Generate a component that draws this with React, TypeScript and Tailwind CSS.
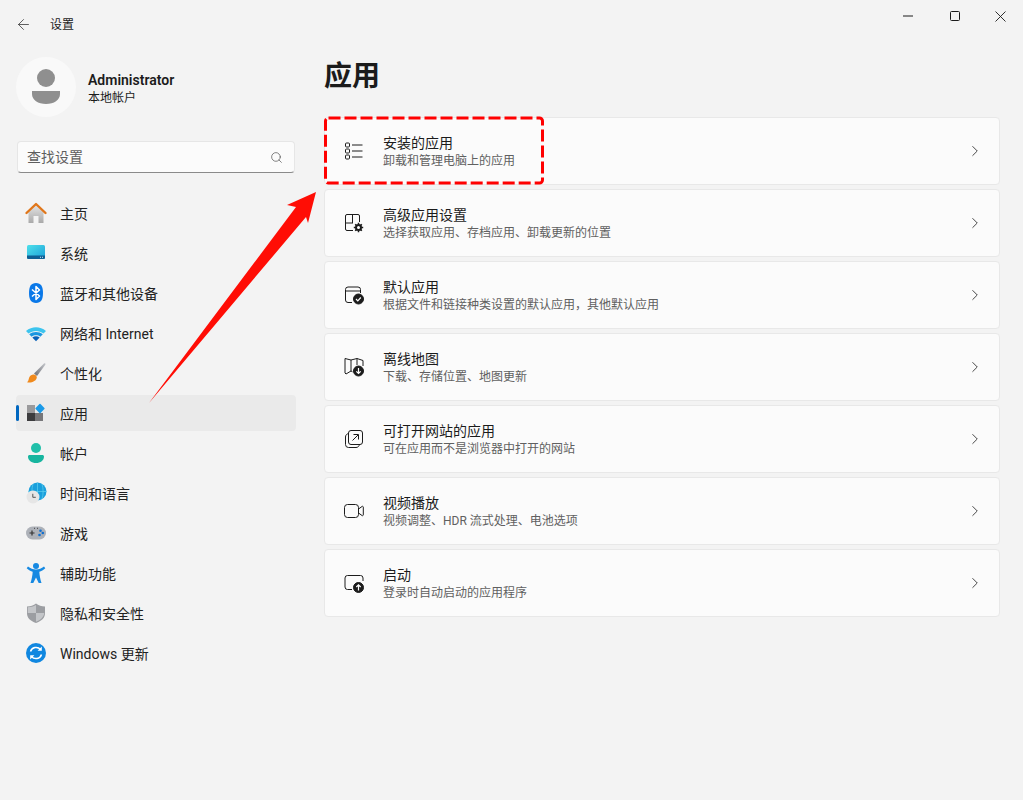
import { ChevronRight, ArrowLeft, Search } from "lucide-react";
import type { ReactNode } from "react";

const font = { fontFamily: 'Roboto, "Noto Sans CJK SC", sans-serif' };

function IconHome() {
  return (
    <svg width="24" height="24" viewBox="0 0 24 24">
      <defs>
        <linearGradient id="homeBody" x1="0" y1="0" x2="0" y2="1">
          <stop offset="0" stopColor="#e4e4e4" />
          <stop offset="1" stopColor="#a9a9a9" />
        </linearGradient>
      </defs>
      <path d="M4.500 11 12 4l7.500 7v11h-5v-7h-5v7h-5z" fill="url(#homeBody)" />
      <path d="M2.500 12 12 3l9.500 9" fill="none" stroke="#e0761a" strokeWidth="2.400" strokeLinecap="round" strokeLinejoin="round" />
    </svg>
  );
}

function IconSystem() {
  return (
    <svg width="24" height="24" viewBox="0 0 24 24">
      <defs>
        <linearGradient id="sysTop" x1="0" y1="0" x2="1" y2="1">
          <stop offset="0" stopColor="#4fe0ea" />
          <stop offset="1" stopColor="#1a9fd8" />
        </linearGradient>
      </defs>
      <rect x="3" y="4" width="18" height="14" rx="1.500" fill="url(#sysTop)" />
      <path d="M3 14.500h18V16.500a1.500 1.500 0 0 1-1.500 1.500h-15A1.500 1.500 0 0 1 3 16.500z" fill="#0f5f94" />
      <rect x="16" y="15.800" width="1" height="1" fill="#cfe8f5" />
      <rect x="18" y="15.800" width="1" height="1" fill="#cfe8f5" />
    </svg>
  );
}

function IconBluetooth() {
  return (
    <svg width="24" height="24" viewBox="0 0 24 24">
      <path d="M12 2c5 0 7 3.500 7 10s-2 10-7 10-7-3.500-7-10 2-10 7-10z" fill="#0a78e8" />
      <path d="M8 8.500 15.500 15 12 18.500V5.500L15.500 9 8 15.500" fill="none" stroke="#fff" strokeWidth="1.500" strokeLinejoin="round" />
    </svg>
  );
}

function IconWifi() {
  return (
    <svg width="24" height="24" viewBox="0 0 24 24">
      <path d="M2 10c6-5 14-5 20 0l-2.500 2.500c-4.500-3.500-10.500-3.500-15 0z" fill="#3cc4ee" />
      <path d="M5.200 13.300c4-3.200 9.600-3.200 13.600 0l-2.400 2.400c-2.600-1.900-6.200-1.900-8.800 0z" fill="#1a96e0" />
      <path d="M8.300 16.400c2.200-1.500 5.200-1.500 7.400 0L12 20.200z" fill="#0a62b8" />
    </svg>
  );
}

function IconBrush() {
  return (
    <svg width="24" height="24" viewBox="0 0 24 24">
      <defs>
        <linearGradient id="brushH" x1="0" y1="1" x2="1" y2="0">
          <stop offset="0" stopColor="#6d6f75" />
          <stop offset="1" stopColor="#c4c6cb" />
        </linearGradient>
      </defs>
      <path d="M20 2.500c1-.6 1.800.2 1.300 1.200L13 15l-3-2.500z" fill="url(#brushH)" />
      <path d="M9 13.500c2-.5 4 1 3.800 3-.3 3.500-5.500 5.800-9.800 4.800 1.800-1.500 1.500-3 2.200-4.800.6-1.500 2-2.700 3.800-3z" fill="#f08a1d" />
    </svg>
  );
}

function IconApps() {
  return (
    <svg width="24" height="24" viewBox="0 0 24 24">
      <rect x="3" y="4" width="8" height="8" fill="#9a9a9c" />
      <rect x="3" y="12" width="8" height="8" fill="#3c3c3e" />
      <rect x="11" y="12" width="8" height="8" fill="#77777a" />
      <rect x="12.500" y="4" width="7" height="7" rx="0.800" transform="rotate(45 16 7.500)" fill="#1a9ae8" />
    </svg>
  );
}

function IconAccount() {
  return (
    <svg width="24" height="24" viewBox="0 0 24 24">
      <circle cx="12" cy="7" r="5" fill="#20bfa9" />
      <path d="M4 15.500c0-1 .8-1.500 1.800-1.500h12.400c1 0 1.800.5 1.800 1.500 0 4-3.500 6.500-8 6.500s-8-2.500-8-6.500z" fill="#17b59f" />
    </svg>
  );
}

function IconTime() {
  return (
    <svg width="24" height="24" viewBox="0 0 24 24">
      <circle cx="13.500" cy="10.500" r="9" fill="#1a9fdc" />
      <path d="M13.500 1.500v18M4.500 10.500h18M9 3c-1.500 5-1.500 10 0 15M18 3c1.500 5 1.500 10 0 15" stroke="#5fd0ee" strokeWidth="0.700" fill="none" />
      <circle cx="9" cy="16" r="6.500" fill="#e6e6e6" />
      <path d="M8.800 12.800V16.300h3" fill="none" stroke="#555" strokeWidth="1" />
    </svg>
  );
}

function IconGame() {
  return (
    <svg width="24" height="24" viewBox="0 0 24 24">
      <rect x="2" y="5.500" width="20" height="13" rx="6.500" fill="#adb1b8" />
      <path d="M5.500 12h5M8 9.500v5" stroke="#333" strokeWidth="1.200" />
      <circle cx="16.500" cy="9.800" r="1.300" fill="#0f6fd0" />
      <circle cx="18.800" cy="12" r="1.300" fill="#0f6fd0" />
      <circle cx="15.500" cy="14" r="1.300" fill="#0f6fd0" />
      <rect x="10" y="6.800" width="1" height="1" fill="#444" />
      <rect x="13" y="6.800" width="1" height="1" fill="#444" />
    </svg>
  );
}

function IconAccess() {
  return (
    <svg width="24" height="24" viewBox="0 0 24 24">
      <circle cx="12" cy="5" r="3" fill="#1689e2" />
      <path d="M4 5.500c2.500 2 5 3 8 3s5.500-1 8-3l1.300 1.700c-2 1.800-4 3-6 3.600.200 3.500 1 7.500 2.200 11.200h-2.800L12 16.500 9.300 22H6.500c1.200-3.700 2-7.700 2.200-11.200-2-.6-4-1.800-6-3.600z" fill="#1689e2" />
    </svg>
  );
}

function IconShield() {
  return (
    <svg width="24" height="24" viewBox="0 0 24 24">
      <path d="M12 2.500c2.500 2 5.500 2.800 9 3v7c0 4.500-3.500 7.500-9 9.500-5.500-2-9-5-9-9.500v-7c3.500-.2 6.500-1 9-3z" fill="#9c9ea2" />
      <path d="M12 4V12H3.800V6.300c3-.2 5.700-.8 8.200-2.300zM12 12h8.200c-.3 4-3.500 6.800-8.200 8.800z" fill="#c4c6c9" />
    </svg>
  );
}

function IconUpdate() {
  return (
    <svg width="24" height="24" viewBox="0 0 24 24">
      <circle cx="12" cy="12" r="10" fill="#1087e0" />
      <path d="M6.500 10.500A5.800 5.800 0 0 1 16.500 8.500M17.500 13.500A5.800 5.800 0 0 1 7.500 15.500" fill="none" stroke="#fff" strokeWidth="1.500" />
      <path d="M17.800 5.500v4.200h-4.200zM6.200 18.500v-4.200h4.200z" fill="#fff" />
    </svg>
  );
}

function AppsList() {
  return (
    <svg width="20" height="20" viewBox="0 0 20 20" fill="none" stroke="#1c1c1c" strokeWidth="1">
      <rect x="1.500" y="2" width="4" height="4" rx="1" />
      <rect x="1.500" y="8" width="4" height="4" rx="1" />
      <rect x="1.500" y="14" width="4" height="4" rx="1" />
      <path d="M8 4h10.500M8 10h10.500M8 16h10.500" />
    </svg>
  );
}

function AppsAdvanced() {
  return (
    <svg width="20" height="20" viewBox="0 0 20 20" fill="none" stroke="#1c1c1c" strokeWidth="1">
      <path d="M9 17.500H3A1.500 1.500 0 0 1 1.500 16V3A1.500 1.500 0 0 1 3 1.500h11A1.500 1.500 0 0 1 15.500 3v6M1.500 10h7.500M8.500 1.500V10" />
      <circle cx="14.500" cy="14.500" r="2.500" stroke="#1c1c1c" strokeWidth="2" />
      <path d="M14.500 9.800v2M14.500 17.200v2M9.800 14.500h2M17.200 14.500h2M11.200 11.200l1.400 1.400M16.400 16.400l1.400 1.400M17.800 11.200l-1.400 1.400M12.600 16.400l-1.400 1.400" strokeWidth="1.500" />
    </svg>
  );
}

function AppsDefault() {
  return (
    <svg width="20" height="20" viewBox="0 0 20 20" fill="none" stroke="#1c1c1c" strokeWidth="1">
      <path d="M8 17.500H4A2.500 2.500 0 0 1 1.500 15V4.500A2.500 2.500 0 0 1 4 2h10A2.500 2.500 0 0 1 16.500 4.500V8M1.500 6h15" />
      <circle cx="14.500" cy="14" r="5" fill="#1c1c1c" />
      <path d="m12 14 1.800 1.800 3-3.300" stroke="#fff" strokeWidth="1.200" />
    </svg>
  );
}

function AppsMap() {
  return (
    <svg width="20" height="20" viewBox="0 0 20 20" fill="none" stroke="#1c1c1c" strokeWidth="1">
      <path d="M7 3 1 1.500V16l1 1 5-3 1.500 .8M7 3v11M7 3l6-1.500 6 2V9M13 1.500V8" />
      <circle cx="14.500" cy="14" r="5" fill="#1c1c1c" />
      <path d="M14.500 11v5.500M12.300 14.300l2.200 2.200 2.200-2.200" stroke="#fff" strokeWidth="1.200" />
    </svg>
  );
}

function AppsWeb() {
  return (
    <svg width="20" height="20" viewBox="0 0 20 20" fill="none" stroke="#1c1c1c" strokeWidth="1">
      <rect x="4.500" y="1.500" width="14" height="14" rx="2.500" />
      <path d="M4.500 4.500C2.800 5 1.500 6 1.500 8v7.500a3 3 0 0 0 3 3H12c2 0 3-1.300 3.500-3" />
      <path d="M8.500 11.500 14 6M9.500 5.500H14.500V10.500" />
    </svg>
  );
}

function AppsVideo() {
  return (
    <svg width="20" height="20" viewBox="0 0 20 20" fill="none" stroke="#1c1c1c" strokeWidth="1">
      <rect x="0.500" y="3.500" width="14" height="13" rx="3" />
      <path d="m14.500 8 3.500-2.500a.8.800 0 0 1 1.300.600v7.800a.8.800 0 0 1-1.300.600L14.500 12" />
    </svg>
  );
}

function AppsStartup() {
  return (
    <svg width="20" height="20" viewBox="0 0 20 20" fill="none" stroke="#1c1c1c" strokeWidth="1">
      <path d="M8 16.500H3.500A2.500 2.500 0 0 1 1 14V5a2.500 2.500 0 0 1 2.500-2.500h13A2.500 2.500 0 0 1 19 5v3" />
      <circle cx="14.500" cy="14.500" r="5" fill="#1c1c1c" />
      <path d="M14.500 17.500V12M12.300 14l2.200-2.200 2.200 2.200" stroke="#fff" strokeWidth="1.200" />
    </svg>
  );
}

const navItems: { label: string; icon: ReactNode; active?: boolean }[] = [
  { label: "主页", icon: <IconHome /> },
  { label: "系统", icon: <IconSystem /> },
  { label: "蓝牙和其他设备", icon: <IconBluetooth /> },
  { label: "网络和 Internet", icon: <IconWifi /> },
  { label: "个性化", icon: <IconBrush /> },
  { label: "应用", icon: <IconApps />, active: true },
  { label: "帐户", icon: <IconAccount /> },
  { label: "时间和语言", icon: <IconTime /> },
  { label: "游戏", icon: <IconGame /> },
  { label: "辅助功能", icon: <IconAccess /> },
  { label: "隐私和安全性", icon: <IconShield /> },
  { label: "Windows 更新", icon: <IconUpdate /> },
];

const cards: { title: string; desc: string; icon: ReactNode }[] = [
  { title: "安装的应用", desc: "卸载和管理电脑上的应用", icon: <AppsList /> },
  { title: "高级应用设置", desc: "选择获取应用、存档应用、卸载更新的位置", icon: <AppsAdvanced /> },
  { title: "默认应用", desc: "根据文件和链接种类设置的默认应用，其他默认应用", icon: <AppsDefault /> },
  { title: "离线地图", desc: "下载、存储位置、地图更新", icon: <AppsMap /> },
  { title: "可打开网站的应用", desc: "可在应用而不是浏览器中打开的网站", icon: <AppsWeb /> },
  { title: "视频播放", desc: "视频调整、HDR 流式处理、电池选项", icon: <AppsVideo /> },
  { title: "启动", desc: "登录时自动启动的应用程序", icon: <AppsStartup /> },
];

export default function App() {
  return (
    <div className="relative h-[800px] w-[1023px] overflow-hidden bg-[#f3f3f3] text-[#1b1b1b]" style={font}>
      {/* title bar */}
      <div className="flex h-12 items-center justify-between">
        <div className="flex items-center">
          <div className="flex w-[47px] justify-center">
            <ArrowLeft size={17} strokeWidth={1.1} className="text-[#333]" />
          </div>
          <span className="ml-[3px] pt-0.5 text-xs">设置</span>
        </div>
        <div className="flex -translate-y-2 items-center">
          <div className="flex w-[46px] justify-center">
            <svg width="10" height="10" viewBox="0 0 10 10"><path d="M0 5h10" stroke="#1a1a1a" strokeWidth="1" /></svg>
          </div>
          <div className="flex w-[46px] translate-x-px justify-center">
            <svg width="10" height="10" viewBox="0 0 10 10"><rect x="0.500" y="0.500" width="9" height="9" rx="1" fill="none" stroke="#1a1a1a" strokeWidth="1" /></svg>
          </div>
          <div className="flex w-[46px] justify-center">
            <svg width="11" height="11" viewBox="0 0 11 11"><path d="m.5.5 10 10M10.500.5l-10 10" stroke="#1a1a1a" strokeWidth="0.900" /></svg>
          </div>
        </div>
      </div>

      <div className="flex">
        {/* sidebar */}
        <aside className="w-[324px] shrink-0 pl-4 pr-7">
          <div className="mt-[9px] flex items-center gap-3">
            <div className="flex h-[60px] w-[60px] items-center justify-center rounded-full bg-[#f9f9f9]">
              <svg width="30" height="36" viewBox="0 0 30 36">
                <circle cx="15" cy="9" r="9" fill="#8f8f8f" />
                <path d="M1 22h28v3c0 6-6 10-14 10S1 31 1 25z" fill="#8f8f8f" />
              </svg>
            </div>
            <div className="flex translate-y-px flex-col">
              <span className="text-sm leading-[19px] font-semibold">Administrator</span>
              <span className="text-xs leading-4">本地帐户</span>
            </div>
          </div>

          <div className="mx-px mt-6 flex h-8 w-[278px] items-center justify-between rounded border border-[#e6e6e6] border-b-[#8a8a8a] bg-[#fbfbfb] pr-[11px] pl-[9px]">
            <span className="text-sm text-[#5e5e5e]">查找设置</span>
            <Search size={13} strokeWidth={1.2} className="text-[#444]" />
          </div>

          <nav className="mt-[22px] flex flex-col gap-1">
            {navItems.map((item) => (
              <div
                key={item.label}
                className={`relative flex h-9 items-center gap-3 rounded pl-2 ${item.active ? "bg-[#eaeaea]" : ""}`}
              >
                {item.active && (
                  <span className="absolute top-[10px] left-0 h-4 w-[3px] rounded-full bg-[#0067c0]" />
                )}
                {item.icon}
                <span className="pt-0.5 text-sm text-[#222]">{item.label}</span>
              </div>
            ))}
          </nav>
        </aside>

        {/* content */}
        <main className="w-[676px]">
          <h1 className="mb-[22px] h-[47px] pt-[5px] text-[28px] leading-[47px] font-semibold">应用</h1>
          <div className="flex flex-col gap-1">
            {cards.map((card) => (
              <div
                key={card.title}
                className="flex h-[68px] items-center rounded border border-[#e8e8e8] bg-[#fbfbfb] pr-[15px] pl-[19px]"
              >
                <div className="flex w-[39px] shrink-0">{card.icon}</div>
                <div className="flex flex-col pt-0.5">
                  <span className="text-sm leading-[19px]">{card.title}</span>
                  <span className="text-xs leading-[17px] text-[#606060]">{card.desc}</span>
                </div>
                <ChevronRight size={18} strokeWidth={1.2} className="ml-auto text-[#333]" />
              </div>
            ))}
          </div>
        </main>
      </div>

      {/* annotation: dashed box and arrow */}
      <svg className="absolute top-0 left-0" width="1023" height="800" viewBox="0 0 1023 800">
        <rect x="325.500" y="118" width="217" height="65" rx="3" fill="none" stroke="#ff0000" strokeWidth="3" strokeDasharray="12 4" />
        <polygon points="149,403 296,207 287,205 316,192 308,223 306,217" fill="#ff0d05" />
      </svg>
    </div>
  );
}
